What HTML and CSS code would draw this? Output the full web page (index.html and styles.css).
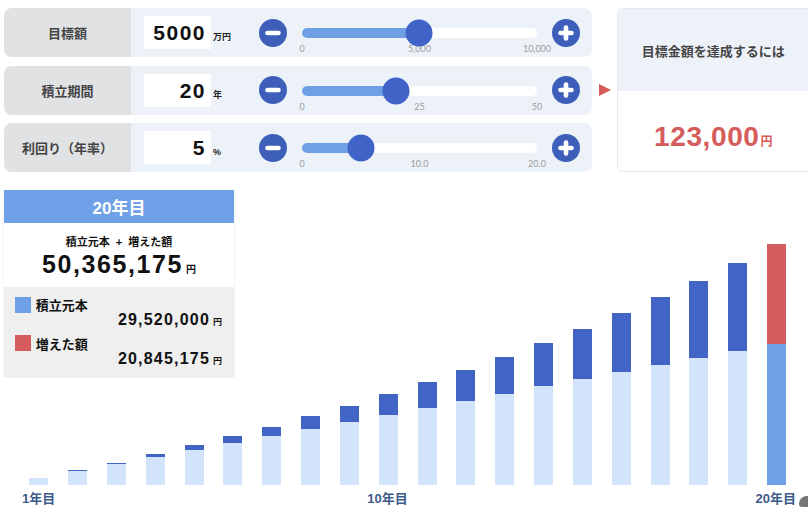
FILE: index.html
```html
<!DOCTYPE html>
<html lang="ja">
<head>
<meta charset="utf-8">
<title>積立シミュレーション</title>
<link rel="stylesheet" href="styles.css">
</head>
<body>
<div class="top">
  <div class="controls">
    <div class="row">
      <div class="label">目標額</div>
      <div class="field">
        <div class="input"><div class="value">5000</div><div class="unit">万円</div></div>
        <svg class="btn" viewBox="0 0 28 28"><circle cx="14" cy="14" r="14" fill="#3d5fb9"/><line x1="8.5" y1="14" x2="19.5" y2="14" stroke="#fff" stroke-width="4.6" stroke-linecap="round"/></svg>
        <div class="slider">
          <div class="track"><div class="fill" style="width:50%"></div><div class="thumb" style="left:50%"></div></div>
          <div class="ticks"><span class="tick"><span>0</span></span><span class="tick"><span>5,000</span></span><span class="tick"><span>10,000</span></span></div>
        </div>
        <svg class="btn" viewBox="0 0 28 28"><circle cx="14" cy="14" r="14" fill="#3d5fb9"/><line x1="8.5" y1="14" x2="19.5" y2="14" stroke="#fff" stroke-width="4.6" stroke-linecap="round"/><line x1="14" y1="8.5" x2="14" y2="19.5" stroke="#fff" stroke-width="4.6" stroke-linecap="round"/></svg>
      </div>
    </div>
    <div class="row">
      <div class="label">積立期間</div>
      <div class="field">
        <div class="input"><div class="value">20</div><div class="unit">年</div></div>
        <svg class="btn" viewBox="0 0 28 28"><circle cx="14" cy="14" r="14" fill="#3d5fb9"/><line x1="8.5" y1="14" x2="19.5" y2="14" stroke="#fff" stroke-width="4.6" stroke-linecap="round"/></svg>
        <div class="slider">
          <div class="track"><div class="fill" style="width:40%"></div><div class="thumb" style="left:40%"></div></div>
          <div class="ticks"><span class="tick"><span>0</span></span><span class="tick"><span>25</span></span><span class="tick"><span>50</span></span></div>
        </div>
        <svg class="btn" viewBox="0 0 28 28"><circle cx="14" cy="14" r="14" fill="#3d5fb9"/><line x1="8.5" y1="14" x2="19.5" y2="14" stroke="#fff" stroke-width="4.6" stroke-linecap="round"/><line x1="14" y1="8.5" x2="14" y2="19.5" stroke="#fff" stroke-width="4.6" stroke-linecap="round"/></svg>
      </div>
    </div>
    <div class="row">
      <div class="label">利回り（年率）</div>
      <div class="field">
        <div class="input"><div class="value">5</div><div class="unit">%</div></div>
        <svg class="btn" viewBox="0 0 28 28"><circle cx="14" cy="14" r="14" fill="#3d5fb9"/><line x1="8.5" y1="14" x2="19.5" y2="14" stroke="#fff" stroke-width="4.6" stroke-linecap="round"/></svg>
        <div class="slider">
          <div class="track"><div class="fill" style="width:25%"></div><div class="thumb" style="left:25%"></div></div>
          <div class="ticks"><span class="tick"><span>0</span></span><span class="tick"><span>10.0</span></span><span class="tick"><span>20.0</span></span></div>
        </div>
        <svg class="btn" viewBox="0 0 28 28"><circle cx="14" cy="14" r="14" fill="#3d5fb9"/><line x1="8.5" y1="14" x2="19.5" y2="14" stroke="#fff" stroke-width="4.6" stroke-linecap="round"/><line x1="14" y1="8.5" x2="14" y2="19.5" stroke="#fff" stroke-width="4.6" stroke-linecap="round"/></svg>
      </div>
    </div>
  </div>
  <div class="arrow"></div>
  <div class="card">
    <div class="card-head">目標金額を達成するには</div>
    <div class="card-body"><span class="amount">123,000</span><span class="amount-yen">円</span></div>
  </div>
</div>

<div class="chart">
  <div class="bars">
    <div class="col"><div class="bar"><div class="p" style="height:7px"></div></div></div>
    <div class="col"><div class="bar"><div class="g" style="height:1px"></div><div class="p" style="height:14px"></div></div></div>
    <div class="col"><div class="bar"><div class="g" style="height:1.5px"></div><div class="p" style="height:21.2px"></div></div></div>
    <div class="col"><div class="bar"><div class="g" style="height:2.8px"></div><div class="p" style="height:28.3px"></div></div></div>
    <div class="col"><div class="bar"><div class="g" style="height:4.6px"></div><div class="p" style="height:35.3px"></div></div></div>
    <div class="col"><div class="bar"><div class="g" style="height:6.7px"></div><div class="p" style="height:42.4px"></div></div></div>
    <div class="col"><div class="bar"><div class="g" style="height:9.3px"></div><div class="p" style="height:49.5px"></div></div></div>
    <div class="col"><div class="bar"><div class="g" style="height:12.5px"></div><div class="p" style="height:56.5px"></div></div></div>
    <div class="col"><div class="bar"><div class="g" style="height:16.2px"></div><div class="p" style="height:63.6px"></div></div></div>
    <div class="col"><div class="bar"><div class="g" style="height:20.4px"></div><div class="p" style="height:70.7px"></div></div></div>
    <div class="col"><div class="bar"><div class="g" style="height:25.2px"></div><div class="p" style="height:77.7px"></div></div></div>
    <div class="col"><div class="bar"><div class="g" style="height:30.6px"></div><div class="p" style="height:84.8px"></div></div></div>
    <div class="col"><div class="bar"><div class="g" style="height:36.7px"></div><div class="p" style="height:91.8px"></div></div></div>
    <div class="col"><div class="bar"><div class="g" style="height:43.3px"></div><div class="p" style="height:98.9px"></div></div></div>
    <div class="col"><div class="bar"><div class="g" style="height:50.7px"></div><div class="p" style="height:106px"></div></div></div>
    <div class="col"><div class="bar"><div class="g" style="height:58.9px"></div><div class="p" style="height:113px"></div></div></div>
    <div class="col"><div class="bar"><div class="g" style="height:67.8px"></div><div class="p" style="height:120.1px"></div></div></div>
    <div class="col"><div class="bar"><div class="g" style="height:77.6px"></div><div class="p" style="height:127.2px"></div></div></div>
    <div class="col"><div class="bar"><div class="g" style="height:88.2px"></div><div class="p" style="height:134.2px"></div></div></div>
    <div class="col"><div class="bar last"><div class="g" style="height:99.7px"></div><div class="p" style="height:141.3px"></div></div></div>
  </div>
  <div class="axis">
    <div class="ax ax1">1年目</div>
    <div class="ax ax10">10年目</div>
    <div class="ax ax20">20年目</div>
  </div>

  <div class="summary">
    <div class="sum-head">20年目</div>
    <div class="sum-total">
      <div class="sum-cap">積立元本 + 増えた額</div>
      <div class="sum-num"><span class="big">50,365,175</span><span class="yen">円</span></div>
    </div>
    <div class="sum-detail">
      <div class="leg">
        <div class="leg-head"><span class="sq sq-blue"></span>積立元本</div>
        <div class="leg-val"><span class="mid">29,520,000</span><span class="yen-s">円</span></div>
      </div>
      <div class="leg">
        <div class="leg-head"><span class="sq sq-red"></span>増えた額</div>
        <div class="leg-val"><span class="mid">20,845,175</span><span class="yen-s">円</span></div>
      </div>
    </div>
  </div>
</div>
<div class="fab"></div>
</body>
</html>
```
FILE: styles.css
```css
html, body {
  margin: 0;
  overflow: hidden;
  background: #fff;
}
body {
  font-family: "Liberation Sans", "Noto Sans CJK JP", sans-serif;
  color: #222;
  width: 808px;
  height: 525px;
}

.top {
  display: flex;
  align-items: center;
  padding: 8px 0 0 4px;
}
.controls {
  display: flex;
  flex-direction: column;
  gap: 8.5px;
  width: 588px;
  flex: none;
}
.row {
  display: flex;
  height: 49px;
  border-radius: 8px;
  overflow: hidden;
  background: #edf2f9;
}
.label {
  width: 127px;
  flex: none;
  background: #e1e2e4;
  display: flex;
  align-items: center;
  justify-content: center;
  font-size: 13px;
  font-weight: bold;
  color: #444;
}
.field {
  display: flex;
  align-items: center;
  padding-left: 13px;
}
.input {
  display: flex;
  align-items: baseline;
}
.value {
  width: 67px;
  height: 33px;
  box-sizing: border-box;
  background: #fff;
  text-align: right;
  padding-right: 5px;
  font-size: 21px;
  line-height: 33px;
  font-weight: bold;
  letter-spacing: 1.5px;
  color: #111;
}
.unit {
  width: 47.6px;
  box-sizing: border-box;
  padding-left: 2px;
  font-size: 9px;
  font-weight: bold;
  color: #222;
}
.btn {
  width: 28px;
  height: 28px;
  flex: none;
  display: block;
}
.slider {
  width: 235px;
  margin: 0 15.4px;
  align-self: stretch;
  padding-top: 20.3px;
  box-sizing: border-box;
}
.track {
  position: relative;
  height: 10px;
  border-radius: 5px;
  background: #fff;
}
.fill {
  height: 100%;
  border-radius: 5px;
  background: #6fa0e6;
}
.thumb {
  position: absolute;
  top: 50%;
  width: 27px;
  height: 27px;
  border-radius: 50%;
  background: #3f63c6;
  transform: translate(-50%, -50%);
}
.ticks {
  display: flex;
  justify-content: space-between;
  margin-top: 6px;
  font-family: "Lato", "Liberation Sans", sans-serif;
  font-size: 9px;
  line-height: 10px;
  color: #9d9d9d;
}
.tick {
  width: 0;
  display: flex;
  justify-content: center;
  white-space: nowrap;
}

.arrow {
  flex: none;
  width: 0;
  height: 0;
  margin-left: 6.6px;
  border-left: 12.4px solid #d85b5b;
  border-top: 6.4px solid transparent;
  border-bottom: 6.4px solid transparent;
}
.card {
  flex: none;
  width: 204px;
  height: 163.4px;
  margin-left: 6.7px;
  box-sizing: border-box;
  border: 1px solid #e6e8eb;
  border-radius: 6px;
  overflow: hidden;
  display: flex;
  flex-direction: column;
}
.card-head {
  height: 82px;
  flex: none;
  background: #edf2f9;
  display: flex;
  align-items: center;
  justify-content: center;
  padding-right: 12px;
  font-size: 13px;
  font-weight: bold;
  color: #444;
}
.card-body {
  flex: 1;
  display: flex;
  align-items: baseline;
  justify-content: center;
  padding-top: 30px;
  padding-right: 12px;
  box-sizing: border-box;
  color: #d65b5b;
  font-weight: bold;
}
.amount {
  font-size: 28px;
  letter-spacing: 0.6px;
}
.amount-yen {
  font-size: 12px;
  margin-left: 1px;
}

.chart {
  position: relative;
  margin-top: 8.3px;
}
.bars {
  display: grid;
  grid-template-columns: repeat(20, 1fr);
  align-items: end;
  width: 776.6px;
  margin-left: 19.4px;
  height: 305px;
}
.col {
  display: flex;
  justify-content: center;
}
.bar {
  width: 19px;
  display: flex;
  flex-direction: column;
}
.g { background: #4264c4; }
.p { background: #d3e3fa; }
.bar.last .g { background: #d65d5d; }
.bar.last .p { background: #72a2e6; }

.axis {
  display: grid;
  grid-template-columns: repeat(20, 1fr);
  width: 776.6px;
  margin-left: 19.4px;
  padding-top: 6px;
  font-size: 13px;
  line-height: 16px;
  font-weight: bold;
  color: #3e5b8d;
}
.ax {
  display: flex;
  justify-content: center;
  white-space: nowrap;
  grid-row: 1;
}
.ax1 { grid-column: 1; }
.ax10 { grid-column: 10; }
.ax20 { grid-column: 20; }

.summary {
  position: absolute;
  left: 4px;
  top: 9.3px;
  width: 230px;
  background: #fff;
  box-shadow: 0 1px 2px rgba(0, 0, 0, 0.12);
}
.sum-head {
  height: 33px;
  background: #6fa0e8;
  color: #fff;
  display: flex;
  align-items: center;
  justify-content: center;
  font-size: 17px;
  font-weight: bold;
}
.sum-total {
  height: 64.4px;
  box-sizing: border-box;
  padding-top: 12px;
  text-align: center;
  font-weight: bold;
  color: #111;
}
.sum-cap {
  font-size: 11px;
  line-height: 14px;
  word-spacing: 3px;
}
.sum-num {
  margin-top: 1px;
  line-height: 28px;
  height: 28px;
}
.big {
  font-size: 25px;
  letter-spacing: 1.6px;
}
.yen {
  font-size: 10px;
  margin-left: 3px;
}
.sum-detail {
  height: 89.3px;
  box-sizing: border-box;
  background: #efefef;
  padding: 10px 12px 0 10.7px;
  font-weight: bold;
  color: #111;
}
.leg + .leg {
  margin-top: 5px;
}
.leg-head {
  display: flex;
  align-items: center;
  gap: 5px;
  height: 16px;
  font-size: 13px;
}
.sq {
  width: 16px;
  height: 16px;
  flex: none;
}
.sq-blue { background: #6fa0e8; }
.sq-red { background: #d75d5d; }
.leg-val {
  margin-top: -2.7px;
  text-align: right;
  line-height: 20px;
  height: 20px;
}
.mid {
  font-size: 16px;
  letter-spacing: 1.2px;
}
.yen-s {
  font-size: 9px;
  margin-left: 3px;
}

.fab {
  position: fixed;
  left: 799px;
  top: 496px;
  width: 12px;
  height: 11px;
  border-radius: 8px 0 0 3px;
  background: #767676;
}
```
